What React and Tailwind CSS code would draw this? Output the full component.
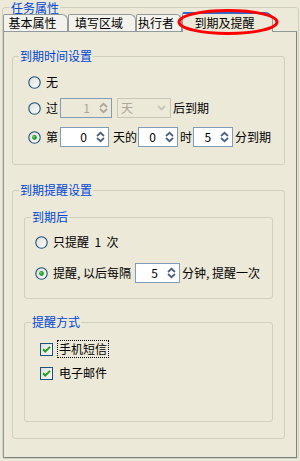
function Radio({ checked }) {
  return (
    <svg width="13" height="13" viewBox="0 0 13 13" className="shrink-0">
      <defs>
        <linearGradient id="radioFill" x1="0" y1="0" x2="1" y2="1">
          <stop offset="0" stopColor="#DCDCD7" />
          <stop offset="1" stopColor="#FFFFFF" />
        </linearGradient>
      </defs>
      <circle cx="6.5" cy="6.5" r="5.7" fill="url(#radioFill)" stroke="#1C5180" strokeWidth="1.1" />
      {checked && <circle cx="6.5" cy="6.5" r="2.4" fill="#21A121" />}
      {checked && <circle cx="6" cy="6" r="0.9" fill="#7BD37B" />}
    </svg>
  );
}

function Checkbox({ checked }) {
  return (
    <svg width="13" height="13" viewBox="0 0 13 13" className="shrink-0">
      <defs>
        <linearGradient id="checkFill" x1="0" y1="0" x2="1" y2="1">
          <stop offset="0" stopColor="#DCDCD7" />
          <stop offset="1" stopColor="#FFFFFF" />
        </linearGradient>
      </defs>
      <rect x="0.5" y="0.5" width="12" height="12" fill="url(#checkFill)" stroke="#1C5180" />
      {checked && (
        <path d="M3 6.2 L5.3 8.6 L10 3.9" fill="none" stroke="#21A121" strokeWidth="2" />
      )}
    </svg>
  );
}

function Arrows({ disabled }) {
  const c = disabled ? "#ACA899" : "#4D6185";
  return (
    <svg width="9" height="12" viewBox="0 0 9 12" className="shrink-0">
      <path d="M1 5 L4.5 1.8 L8 5" fill="none" stroke={c} strokeWidth="1.8" />
      <path d="M1 7 L4.5 10.2 L8 7" fill="none" stroke={c} strokeWidth="1.8" />
    </svg>
  );
}

function Spin({ className, value, disabled }) {
  return (
    <div
      className={`flex h-[20px] shrink-0 items-center justify-end border border-[#7F9DB9] pr-[3px] ${
        disabled ? "bg-[#ECE9D8] text-[#ACA899]" : "bg-white text-black"
      } ${className}`}
    >
      <span className="mr-[9px] leading-none">{value}</span>
      <Arrows disabled={disabled} />
    </div>
  );
}

function Group({ title, className, children }) {
  return (
    <fieldset className={`rounded-[3px] border border-[#D0D0BF] ${className}`}>
      <legend className="ml-[6px] px-[1px] text-[12px] leading-[12px] text-[#0046D5]">{title}</legend>
      {children}
    </fieldset>
  );
}

const tabs = [
  { name: "基本属性", w: "w-[65px]" },
  { name: "填写区域", w: "w-[68px]" },
  { name: "执行者", w: "w-[46px]" },
];

export default function App() {
  return (
    <div className="relative h-[461px] w-[300px] overflow-hidden bg-[#ECE9D8] pt-[1px] text-[12px] text-black font-['Noto_Sans_CJK_SC','Noto_Sans',sans-serif]">
      <fieldset className="ml-[2px] h-[458px] w-[297px] rounded-[3px] border border-[#D0D0BF]">
        <legend className="ml-[7px] px-[1px] text-[12px] leading-[13px] text-[#0046D5]">任务属性</legend>

        {/* 标签页 */}
        <div className="flex h-[17px] items-end">
          {tabs.map((t) => (
            <div
              key={t.name}
              className={`${t.w} flex h-[17px] items-center justify-center rounded-tl-[2px] rounded-tr-[6px] border-l border-r border-t border-[#919B9C] bg-[#F3F2EC] pr-[6px] leading-none`}
            >
              {t.name}
            </div>
          ))}
          <div className="relative z-10 -mb-px flex h-[20px] w-[91px] items-center justify-center rounded-tl-[2px] rounded-tr-[8px] border-l border-r border-t-2 border-[#919B9C] border-t-[#316AC5] bg-[#ECE9D8] pr-[6px] leading-none">
            到期及提醒
          </div>
        </div>

        {/* 标签页内容 */}
        <div className="h-[427px] w-[294px] border border-[#919B9C] border-b-[#7A8384] border-r-[#7A8384] bg-[#ECE9D8] pt-[18px]">
          <Group title="到期时间设置" className="ml-[8px] h-[115px] w-[273px]">
            <div className="pl-[15px]">
              <div className="mt-[10px] flex h-[20px] items-center gap-[5px]">
                <Radio />
                <span>无</span>
              </div>
              <div className="mt-[6px] flex h-[20px] items-center">
                <Radio />
                <span className="ml-[5px] mr-[2px]">过</span>
                <Spin className="w-[52px]" value="1" disabled />
                <div className="ml-[5px] flex h-[20px] w-[54px] items-center justify-between border border-[#C9C7BA] pl-[3px] pr-[4px] text-[#ACA899]">
                  <span className="leading-none">天</span>
                  <svg width="9" height="6" viewBox="0 0 9 6">
                    <path d="M1 1 L4.5 4.5 L8 1" fill="none" stroke="#C9C7BA" strokeWidth="1.8" />
                  </svg>
                </div>
                <span className="ml-[2px]">后到期</span>
              </div>
              <div className="mt-[9px] flex h-[20px] items-center">
                <Radio checked />
                <span className="ml-[5px] mr-[2px]">第</span>
                <Spin className="w-[49px]" value="0" />
                <span className="ml-[4px] mr-[1px]">天的</span>
                <Spin className="w-[40px]" value="0" />
                <span className="ml-[2px] mr-[1px]">时</span>
                <Spin className="w-[40px]" value="5" />
                <span className="ml-[2px]">分到期</span>
              </div>
            </div>
          </Group>

          <Group title="到期提醒设置" className="ml-[8px] mt-[19px] h-[255px] w-[273px]">
            <Group title="到期后" className="ml-[11px] mt-[15px] h-[88px] w-[249px]">
              <div className="pl-[10px]">
                <div className="mt-[9px] flex h-[20px] items-center gap-[5px]">
                  <Radio />
                  <span className="whitespace-pre">只提醒  1  次</span>
                </div>
                <div className="mt-[11px] flex h-[20px] items-center">
                  <Radio checked />
                  <span className="ml-[5px] whitespace-pre">提醒, 以后每隔</span>
                  <Spin className="ml-[4px] w-[45px]" value="5" />
                  <span className="ml-[2px] whitespace-pre">分钟, 提醒一次</span>
                </div>
              </div>
            </Group>

            <Group title="提醒方式" className="ml-[11px] mt-[17px] h-[106px] w-[249px]">
              <div className="pl-[15px]">
                <div className="mt-[12px] flex h-[18px] items-center gap-[4px]">
                  <Checkbox checked />
                  <span className="border border-dotted border-black px-[1px] leading-[16px]">手机短信</span>
                </div>
                <div className="mt-[6px] flex h-[18px] items-center gap-[4px]">
                  <Checkbox checked />
                  <span className="border border-transparent px-[1px] leading-[16px]">电子邮件</span>
                </div>
              </div>
            </Group>
          </Group>
        </div>
      </fieldset>

      {/* 红色圈注 */}
      <svg className="pointer-events-none absolute left-[176px] top-[8px] z-20" width="104" height="28" viewBox="0 0 104 28">
        <ellipse cx="52" cy="14" rx="49" ry="11.5" fill="none" stroke="#FF0000" strokeWidth="3" />
      </svg>
    </div>
  );
}
